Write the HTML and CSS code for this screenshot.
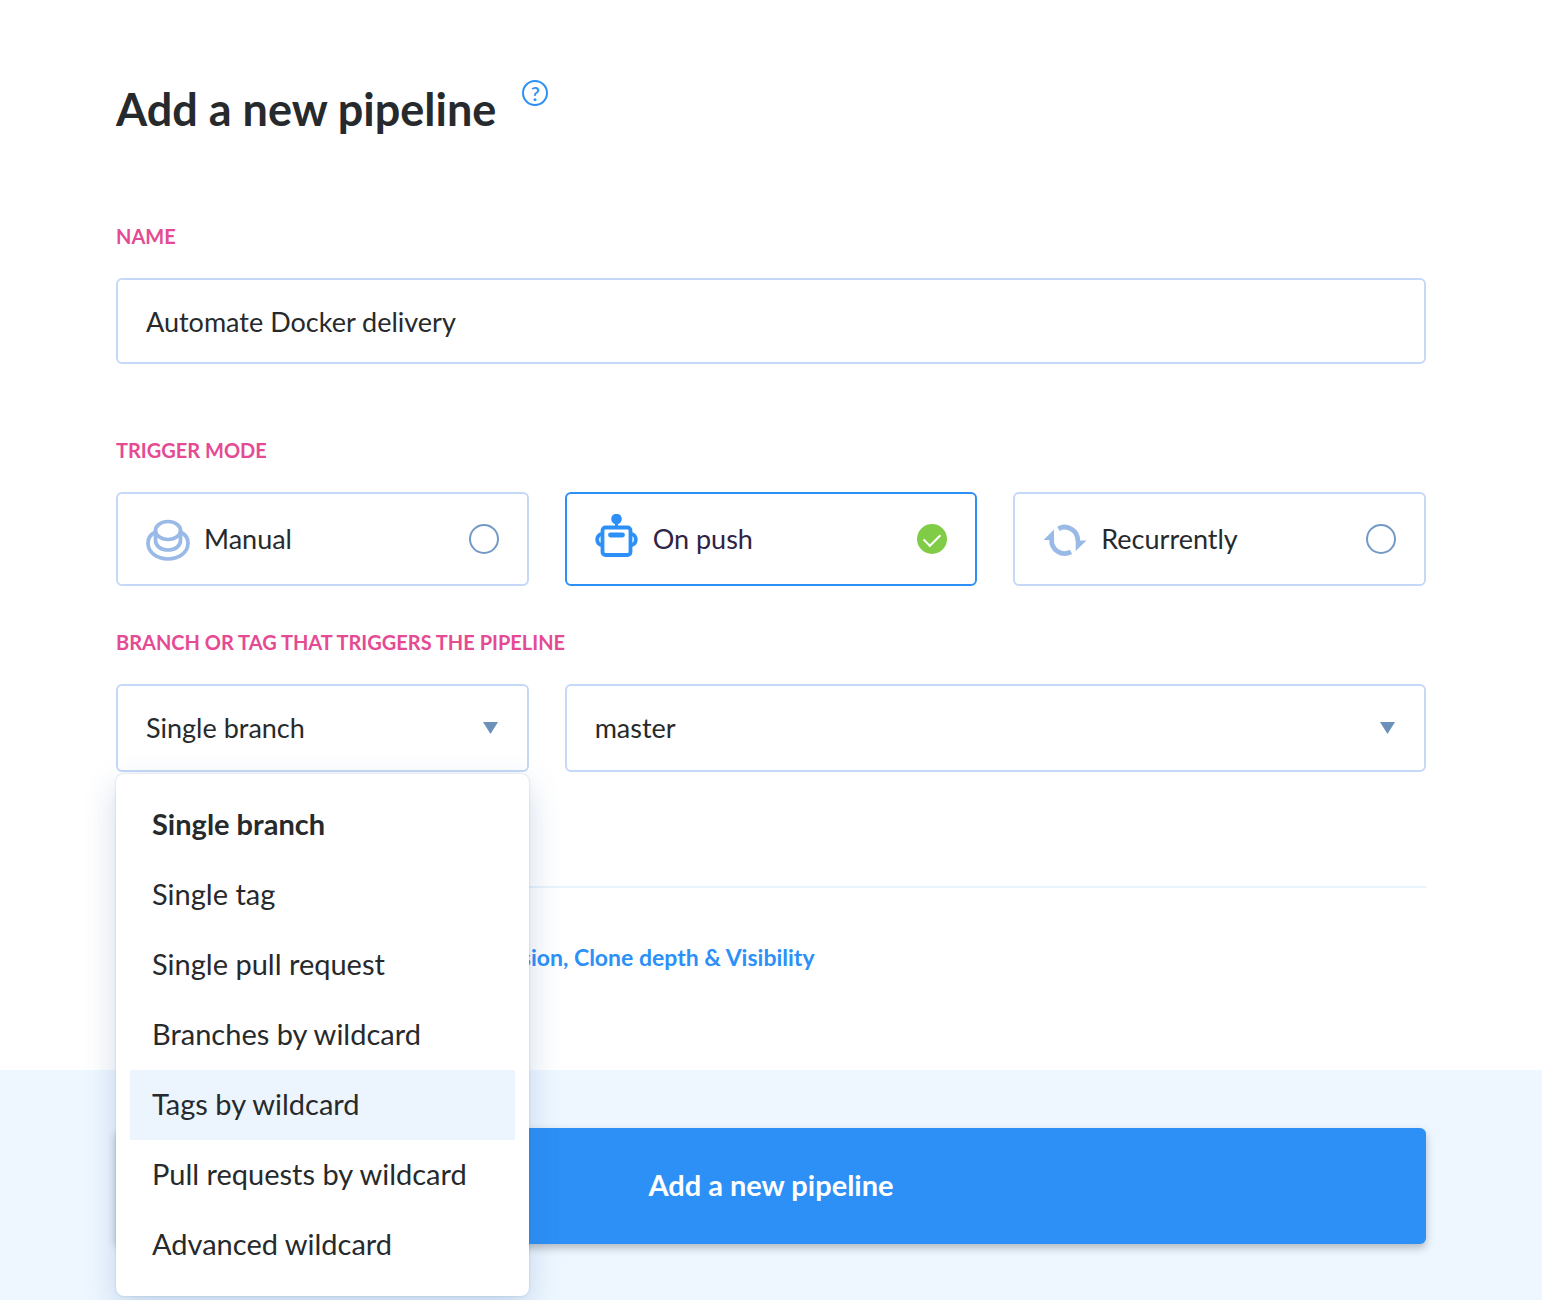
FILE: index.html
```html
<!DOCTYPE html>
<html lang="en">
<head>
<meta charset="utf-8">
<meta name="viewport" content="width=device-width, initial-scale=1">
<title>Add a new pipeline</title>
<link rel="stylesheet" href="styles.css">
</head>
<body>
<form class="pipeline-form">
  <main class="content">
    <header class="page-header">
      <h1 class="title">Add a new pipeline</h1>
      <a class="help" href="#help" aria-label="Help">?</a>
    </header>

    <div class="field">
      <label class="label" for="name">NAME</label>
      <input class="control" id="name" type="text" value="Automate Docker delivery">
    </div>

    <fieldset class="field modes-field">
      <legend class="label">TRIGGER MODE</legend>
      <div class="columns">
        <label class="mode">
          <svg class="mode-icon" viewBox="0 0 44 50" fill="none" stroke="#99bae6" stroke-width="3.7" aria-hidden="true">
            <ellipse cx="22" cy="16.500" rx="12.600" ry="9"/>
            <path d="M9.500 17v9c0 6 5 10 12.500 10s12.500-4 12.500-10v-9"/>
            <path d="M9.500 18C4.500 20.500 2 24.500 2 29c0 9.500 9 16 20 16s20-6.500 20-16c0-4.500-2.500-8.500-7.500-11"/>
          </svg>
          <span class="mode-name">Manual</span>
          <input class="radio" type="radio" name="mode">
        </label>
        <label class="mode mode-active">
          <svg class="mode-icon" viewBox="0 0 44 50" fill="none" stroke="#2c90f7" stroke-width="3.8" aria-hidden="true">
            <circle cx="21.500" cy="5" r="5.300" fill="#2c90f7" stroke="none"/>
            <path d="M21.500 8v5" stroke-width="3"/>
            <rect x="7.500" y="13.500" width="28" height="27.500" rx="3"/>
            <path d="M15.500 21h12" stroke-width="4.800" stroke-linecap="round"/>
            <path d="M7 20.200C.6 20.200.6 31 7 31M36 20.200c6.400 0 6.400 10.800 0 10.800"/>
          </svg>
          <span class="mode-name">On push</span>
          <input class="radio" type="radio" name="mode" checked>
        </label>
        <label class="mode">
          <svg class="mode-icon" viewBox="0 0 44 50" fill="none" stroke="#99bae6" stroke-width="4.800" aria-hidden="true">
            <path d="M15.400 14.800A13 13 0 0 1 34.700 27"/>
            <path d="M28 37.800A13 13 0 0 1 8.700 25.500"/>
            <path d="M.5 26L11 15.500V26zM43.500 26.500L32.700 37V26.500z" fill="#99bae6" stroke="none"/>
          </svg>
          <span class="mode-name">Recurrently</span>
          <input class="radio" type="radio" name="mode">
        </label>
      </div>
    </fieldset>

    <div class="field">
      <label class="label" for="ref-type">BRANCH OR TAG THAT TRIGGERS THE PIPELINE</label>
      <div class="columns">
        <div class="picker">
          <select class="control select" id="ref-type">
            <option>Single branch</option>
            <option>Single tag</option>
            <option>Single pull request</option>
            <option>Branches by wildcard</option>
            <option>Tags by wildcard</option>
            <option>Pull requests by wildcard</option>
            <option>Advanced wildcard</option>
          </select>
          <svg class="arrow" viewBox="0 0 16 12" aria-hidden="true"><path d="M0 0h15L7.500 12z" fill="#6b90b9"/></svg>
          <ul class="menu" role="listbox" aria-label="Trigger type">
            <li class="menu-item menu-item-selected" role="option" aria-selected="true">Single branch</li>
            <li class="menu-item" role="option">Single tag</li>
            <li class="menu-item" role="option">Single pull request</li>
            <li class="menu-item" role="option">Branches by wildcard</li>
            <li class="menu-item menu-item-hover" role="option">Tags by wildcard</li>
            <li class="menu-item" role="option">Pull requests by wildcard</li>
            <li class="menu-item" role="option">Advanced wildcard</li>
          </ul>
        </div>
        <div class="picker picker-wide">
          <select class="control select" aria-label="Branch">
            <option>master</option>
          </select>
          <svg class="arrow" viewBox="0 0 16 12" aria-hidden="true"><path d="M0 0h15L7.500 12z" fill="#6b90b9"/></svg>
        </div>
      </div>
    </div>

    <div class="more">
      <a class="more-link" href="#options">More settings: Trigger condition, Permission, Clone depth &amp; Visibility</a>
    </div>
  </main>
  <footer class="footer">
    <button class="submit" type="submit">Add a new pipeline</button>
  </footer>
</form>
</body>
</html>
```
FILE: styles.css
```css
* { box-sizing: border-box; }

body {
  margin: 0;
  background: #fff;
  color: #272a2c;
  font-family: Lato, "Liberation Sans", sans-serif;
  font-size: 27px;
}

.pipeline-form {
  min-height: 100vh;
  display: flex;
  flex-direction: column;
}

.content {
  flex-shrink: 0;
  padding: 80px 116px 96px;
}

.page-header {
  display: flex;
  align-items: flex-start;
  gap: 26px;
  margin-bottom: 86px;
}

.title {
  margin: 0;
  font-size: 45px;
  line-height: 58px;
  font-weight: 700;
}

.help {
  display: grid;
  place-items: center;
  width: 26px;
  height: 26px;
  border: 2px solid #2c90f7;
  border-radius: 50%;
  color: #2c90f7;
  font-size: 20px;
  line-height: 22px;
  font-weight: 600;
  text-decoration: none;
}

.field {
  margin: 0 0 74px;
  padding: 0;
  border: 0;
  min-width: 0;
}

.modes-field { margin-bottom: 44px; }

.label {
  display: block;
  margin: 0 0 30px;
  padding: 0;
  color: #e44b93;
  font-size: 20px;
  line-height: 24px;
  font-weight: 700;
}

.control {
  display: block;
  width: 100%;
  height: 86px;
  padding: 0 28px;
  border: 2px solid #c5d8f7;
  border-radius: 6px;
  background: #fff;
  color: inherit;
  font: inherit;
  outline: 0;
}

.columns {
  display: grid;
  grid-template-columns: repeat(3, 1fr);
  gap: 36px;
}

.mode {
  display: flex;
  align-items: center;
  height: 94px;
  padding: 0 28px;
  border: 2px solid #c5d8f7;
  border-radius: 6px;
}

.mode-active {
  border-color: #2c90f7;
  color: #2f2346;
}

.mode-icon {
  width: 44px;
  height: 50px;
  margin-right: 14px;
}

.mode-name {
  flex: 1;
  padding-bottom: 2px;
}

.radio {
  appearance: none;
  width: 30px;
  height: 30px;
  margin: 0;
  border: 2px solid #7399c6;
  border-radius: 50%;
}

.radio:checked {
  border: 0;
  background: #80cc46;
  display: grid;
  place-items: center;
}

.radio:checked::before {
  content: "";
  width: 14px;
  height: 8px;
  border: solid #fff;
  border-width: 0 0 2px 2px;
  transform: translateY(-1px) rotate(-45deg);
}

.picker { position: relative; }
.picker-wide { grid-column: span 2; }

.select {
  appearance: none;
  height: 88px;
  padding-bottom: 2px;
}

.arrow {
  position: absolute;
  top: 38px;
  right: 30px;
  width: 16px;
  height: 12px;
  pointer-events: none;
}

.menu {
  position: absolute;
  top: 90px;
  left: 0;
  right: 0;
  z-index: 1;
  margin: 0;
  padding: 16px 14px;
  border-radius: 8px;
  background: #fff;
  box-shadow: 0 0 2px rgba(60, 100, 160, 0.3), 0 12px 32px rgba(40, 90, 160, 0.22);
  list-style: none;
  font-size: 29px;
}

.menu-item {
  height: 70px;
  padding: 0 22px;
  line-height: 68px;
}

.menu-item-selected { font-weight: 700; }
.menu-item-hover { background: #ecf5fd; }

.more {
  margin-top: 114px;
  padding-top: 54px;
  border-top: 2px solid #e8f3fc;
}

.more-link {
  display: block;
  padding-bottom: 2px;
  color: #2c90f7;
  font-size: 23px;
  line-height: 30px;
  font-weight: 700;
  text-decoration: none;
}

.footer {
  flex: 1;
  padding: 58px 116px 56px;
  background: #eef7ff;
}

.submit {
  display: block;
  width: 100%;
  height: 116px;
  padding: 0 0 4px;
  border: 0;
  border-radius: 6px;
  background: #2c90f7;
  box-shadow: 0 4px 8px rgba(0, 0, 0, 0.25);
  color: #fff;
  font: inherit;
  font-size: 29px;
  font-weight: 700;
}
```
